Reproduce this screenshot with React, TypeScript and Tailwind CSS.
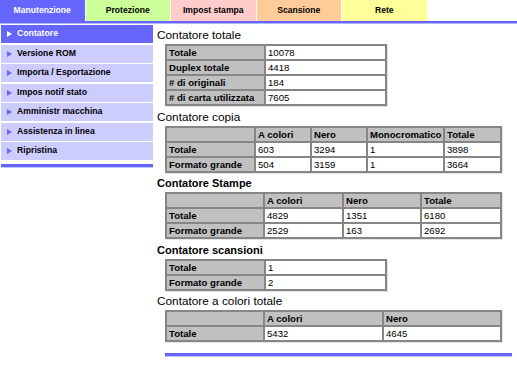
import React from "react";

const font = "font-['Liberation_Sans',Arial,sans-serif]";

const Tri = ({ color }: { color: string }) => (
  <svg width="5" height="6" viewBox="0 0 5 6" className="shrink-0">
    <polygon points="0,0 5,3 0,6" fill={color} />
  </svg>
);

const tabs = [
  { label: "Manutenzione", cls: "bg-[#6666ff] text-white" },
  { label: "Protezione", cls: "bg-[#ccff99] text-black" },
  { label: "Impost stampa", cls: "bg-[#ffcccc] text-black" },
  { label: "Scansione", cls: "bg-[#ffcc99] text-black" },
  { label: "Rete", cls: "bg-[#ffff99] text-black" },
];

const menu = [
  "Contatore",
  "Versione ROM",
  "Importa / Esportazione",
  "Impos notif stato",
  "Amministr macchina",
  "Assistenza in linea",
  "Ripristina",
];

type Cell = { t: string; h?: boolean; w?: string };

const Table = ({ rows, width }: { rows: Cell[][]; width: string }) => (
  <table
    className={`ml-[8px] border-separate border-spacing-[2px] bg-[#868686] table-fixed shadow-[1px_1px_0_#e4e4e4] ${width}`}
  >
    <tbody>
      {rows.map((r, i) => (
        <tr key={i}>
          {r.map((c, j) => (
            <td
              key={j}
              className={`h-[13px] p-0 pl-[2px] text-[9.6px] leading-[13px] text-black whitespace-nowrap overflow-hidden ${
                c.h ? "bg-[#c0c0c0] font-bold" : "bg-white"
              } ${c.w ?? ""}`}
            >
              {c.t}
            </td>
          ))}
        </tr>
      ))}
    </tbody>
  </table>
);

const Title = ({ children, bold, first }: { children: React.ReactNode; bold?: boolean; first?: boolean }) => (
  <div
    className={`h-[17px] leading-[17px] text-black ${first ? "mt-[3px]" : "mt-[2.5px]"} ${
      bold ? "text-[11px] font-bold" : "text-[11.8px]"
    }`}
  >
    {children}
  </div>
);

export default function App() {
  return (
    <div className={`${font} w-[517px] h-[377px] bg-white overflow-hidden`}>
      {/* tabs */}
      <div className="flex gap-px h-[21px]">
        {tabs.map((t) => (
          <div
            key={t.label}
            className={`w-[84.5px] flex items-center justify-center text-[8.6px] font-bold ${t.cls}`}
          >
            {t.label}
          </div>
        ))}
      </div>
      <div className="h-[2px] bg-[#6666ff]" />
      <div className="h-px bg-[#b4b4ff]" />

      <div className="flex">
        {/* sidebar */}
        <div className="w-[152px] ml-px shrink-0 pt-px">
          <div className="flex flex-col gap-[1.5px]">
            {menu.map((m, i) => (
              <div
                key={m}
                className={`h-[18px] flex items-center pl-[6px] gap-[5px] text-[8.7px] font-bold ${
                  i === 0 ? "bg-[#6666ff] text-white" : "bg-[#ccccff] text-black"
                }`}
              >
                <Tri color={i === 0 ? "#ffffff" : "#6666ff"} />
                <span>{m}</span>
              </div>
            ))}
          </div>
          <div className="mt-[4px] h-[3px] bg-[#6666ff]" />
          <div className="h-px bg-[#c4c4ff]" />
        </div>

        {/* main */}
        <div className="ml-[4px] flex flex-col">
          <Title first>Contatore totale</Title>
          <Table
            width="w-[222px]"
            rows={[
              [{ t: "Totale", h: true, w: "w-[97px]" }, { t: "10078", w: "w-[119px]" }],
              [{ t: "Duplex totale", h: true }, { t: "4418" }],
              [{ t: "# di originali", h: true }, { t: "184" }],
              [{ t: "# di carta utilizzata", h: true }, { t: "7605" }],
            ]}
          />

          <Title>Contatore copia</Title>
          <Table
            width="w-[337px]"
            rows={[
              [
                { t: "", h: true, w: "w-[87px]" },
                { t: "A colori", h: true, w: "w-[54px]" },
                { t: "Nero", h: true, w: "w-[54px]" },
                { t: "Monocromatico", h: true, w: "w-[75px]" },
                { t: "Totale", h: true, w: "w-[55px]" },
              ],
              [{ t: "Totale", h: true }, { t: "603" }, { t: "3294" }, { t: "1" }, { t: "3898" }],
              [{ t: "Formato grande", h: true }, { t: "504" }, { t: "3159" }, { t: "1" }, { t: "3664" }],
            ]}
          />

          <Title bold>Contatore Stampe</Title>
          <Table
            width="w-[337px]"
            rows={[
              [
                { t: "", h: true, w: "w-[96px]" },
                { t: "A colori", h: true, w: "w-[77px]" },
                { t: "Nero", h: true, w: "w-[76px]" },
                { t: "Totale", h: true, w: "w-[78px]" },
              ],
              [{ t: "Totale", h: true }, { t: "4829" }, { t: "1351" }, { t: "6180" }],
              [{ t: "Formato grande", h: true }, { t: "2529" }, { t: "163" }, { t: "2692" }],
            ]}
          />

          <Title bold>Contatore scansioni</Title>
          <Table
            width="w-[222px]"
            rows={[
              [{ t: "Totale", h: true, w: "w-[97px]" }, { t: "1", w: "w-[119px]" }],
              [{ t: "Formato grande", h: true }, { t: "2" }],
            ]}
          />

          <Title>Contatore a colori totale</Title>
          <Table
            width="w-[337px]"
            rows={[
              [
                { t: "", h: true, w: "w-[96px]" },
                { t: "A colori", h: true, w: "w-[117px]" },
                { t: "Nero", h: true, w: "w-[116px]" },
              ],
              [{ t: "Totale", h: true }, { t: "5432" }, { t: "4645" }],
            ]}
          />

          <div className="ml-[8px] mt-[11px] w-[347px] h-[3px] bg-[#6666ff]" />
          <div className="ml-[8px] w-[347px] h-px bg-[#c4c4ff]" />
        </div>
      </div>
    </div>
  );
}
